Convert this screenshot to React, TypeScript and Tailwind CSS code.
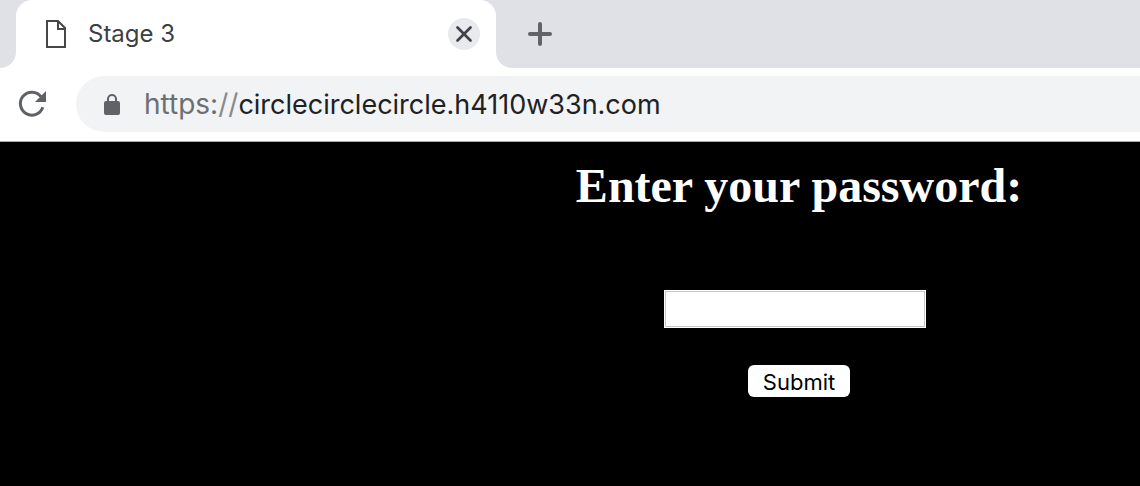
function TabStrip() {
  return (
    <div className="flex h-17 bg-white">
      <div className="w-4 shrink-0 rounded-br-2xl bg-[#dfe1e6]" />
      <div className="w-120 shrink-0 bg-[#dfe1e6]">
        <div role="tab" aria-selected="true" className="flex h-full items-center rounded-t-2xl bg-white pr-4 pl-7">
          <svg width="24" height="32" viewBox="0 0 24 32" fill="none" stroke="#474747" strokeWidth="2" aria-hidden="true">
            <path d="M3 3h11l7 7v19H3z" />
            <path d="M14 3v8h7" />
          </svg>
          <span className="ml-5 flex-1 text-2xl text-[#3c4043]">Stage 3</span>
          <button type="button" aria-label="Close tab" className="flex size-8 items-center justify-center rounded-full bg-[#e8eaed]">
            <svg width="20" height="20" viewBox="0 0 20 20" stroke="#3f4246" strokeWidth="2.7" strokeLinecap="round" aria-hidden="true">
              <path d="M3.5 3.5l13 13M16.5 3.5l-13 13" />
            </svg>
          </button>
        </div>
      </div>
      <div className="flex flex-1 items-center rounded-bl-2xl bg-[#dfe1e6] pl-7">
        <button type="button" aria-label="New tab" className="flex size-8 items-center justify-center">
          <svg width="32" height="32" viewBox="0 0 32 32" stroke="#606368" strokeWidth="4" strokeLinecap="round" aria-hidden="true">
            <path d="M16 6v20M6 16h20" />
          </svg>
        </button>
      </div>
    </div>
  );
}

function AddressBar() {
  return (
    <div className="flex items-center border-b border-[#a9abad] bg-white pt-2 pb-[9px] pl-4">
      <button type="button" aria-label="Reload" className="size-8 shrink-0">
        <svg width="32" height="32" viewBox="0 0 32 32" fill="none" aria-hidden="true">
          <path d="M26.8 19.3A11.5 11.5 0 1 1 25 8.6" stroke="#5f6368" strokeWidth="3" />
          <path d="M30 3v11H19z" fill="#5f6368" />
        </svg>
      </button>
      <div className="ml-7 flex h-14 flex-1 items-center rounded-l-full bg-[#f1f3f4] pl-7">
        <svg width="16" height="24" viewBox="0 0 16 24" fill="none" aria-hidden="true">
          <path d="M4 10V7a4 4 0 0 1 8 0v3" stroke="#5f6368" strokeWidth="2" />
          <rect y="9" width="16" height="14" rx="2" fill="#5f6368" />
        </svg>
        <div className="ml-6 flex flex-1 items-baseline">
          <label htmlFor="address" className="text-[28px] text-[#6b6f73]">
            https:<span className="text-[#868a8e]">//</span>
          </label>
          <input
            id="address"
            type="text"
            defaultValue="circlecirclecircle.h4110w33n.com"
            className="min-w-0 flex-1 bg-transparent text-[27px] text-[#202124] outline-none"
          />
        </div>
      </div>
    </div>
  );
}

export default function App() {
  return (
    <div className="flex min-h-screen flex-col bg-black font-['Inter',sans-serif]">
      <header>
        <TabStrip />
        <AddressBar />
      </header>
      <main className="flex flex-1 flex-col items-center pt-4 pl-[458px]">
        <h1 className="font-['Liberation_Serif',serif] text-5xl leading-14 font-bold whitespace-nowrap text-white">
          <label htmlFor="password">Enter your password:</label>
        </h1>
        <form className="mt-19 flex flex-col items-center" onSubmit={(event) => event.preventDefault()}>
          <div className="mr-2 border border-white">
            <input
              id="password"
              type="password"
              className="block h-9 w-65 border border-[#c4c4c4] bg-white px-1 text-[22px] text-black outline-none"
            />
          </div>
          <button type="submit" className="mt-[37px] h-8 rounded-md bg-white px-[15px] pt-[2px] text-[22px] leading-[30px] text-black">
            Submit
          </button>
        </form>
      </main>
    </div>
  );
}
